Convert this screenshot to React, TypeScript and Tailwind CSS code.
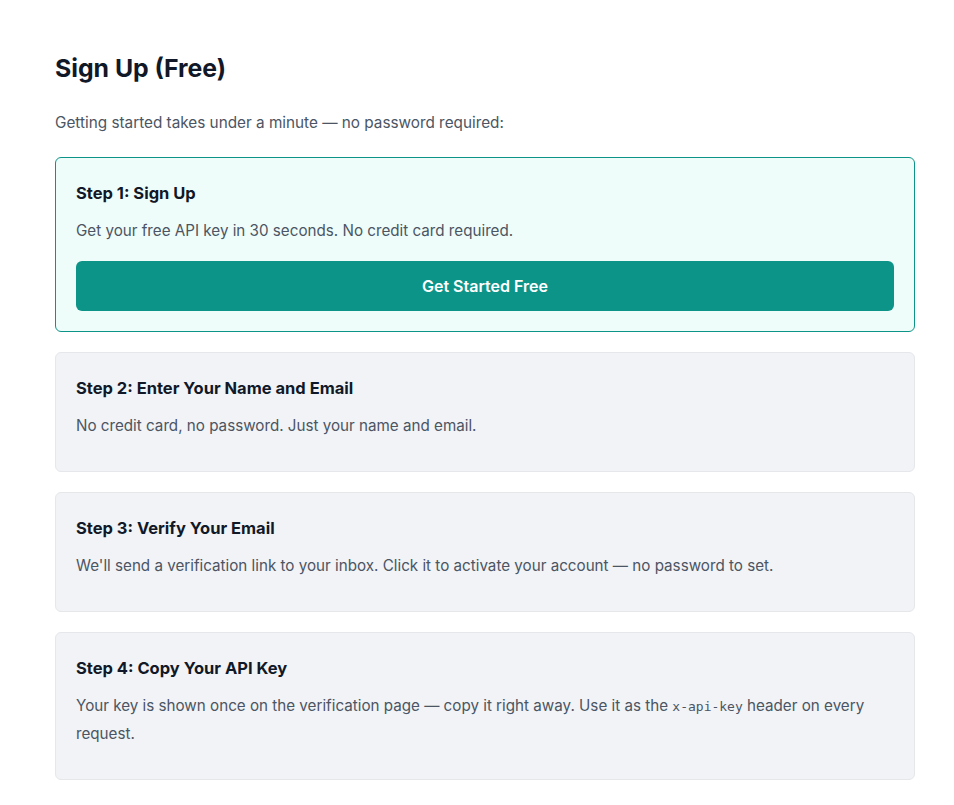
const steps = [
  {
    title: "Step 2: Enter Your Name and Email",
    body: <>No credit card, no password. Just your name and email.</>,
  },
  {
    title: "Step 3: Verify Your Email",
    body: (
      <>
        We'll send a verification link to your inbox. Click it to activate your
        account — no password to set.
      </>
    ),
  },
  {
    title: "Step 4: Copy Your API Key",
    body: (
      <>
        Your key is shown once on the verification page — copy it right away.
        Use it as the{" "}
        <code className="font-['DejaVu_Sans_Mono',monospace] text-[13px] leading-none">
          x-api-key
        </code>{" "}
        header on every request.
      </>
    ),
  },
];

export default function App() {
  return (
    <div className="min-h-screen bg-white font-['Inter',sans-serif] text-[#111827]">
      <div className="ml-[55px] w-[860px] pt-[52px] pb-6">
        <h1 className="text-[24.8px] font-bold leading-8">Sign Up (Free)</h1>
        <p className="mt-[27px] text-[15.3px] leading-6 text-[#4b5563]">
          Getting started takes under a minute — no password required:
        </p>

        <div className="mt-[22px] flex flex-col gap-5">
          <section className="rounded-md border border-[#0d9488] bg-[#effdfa] px-5 pt-[21px] pb-5">
            <h2 className="text-[16.5px] font-bold leading-7">Step 1: Sign Up</h2>
            <p className="mt-[10px] text-[15.2px] leading-7 text-[#4b5563]">
              Get your free API key in 30 seconds. No credit card required.
            </p>
            <button
              type="button"
              className="mt-[16px] flex h-[50px] w-full items-center justify-center rounded-md bg-[#0d9488] text-[16px] font-semibold text-white"
            >
              Get Started Free
            </button>
          </section>

          {steps.map((step) => (
            <section
              key={step.title}
              className="rounded-md border border-[#e5e7eb] bg-[#f1f3f6] px-5 pt-[21px] pb-[31px]"
            >
              <h2 className="text-[16.5px] font-bold leading-7">{step.title}</h2>
              <p className="mt-[10px] text-[15.2px] leading-7 text-[#4b5563]">
                {step.body}
              </p>
            </section>
          ))}
        </div>
      </div>
    </div>
  );
}
